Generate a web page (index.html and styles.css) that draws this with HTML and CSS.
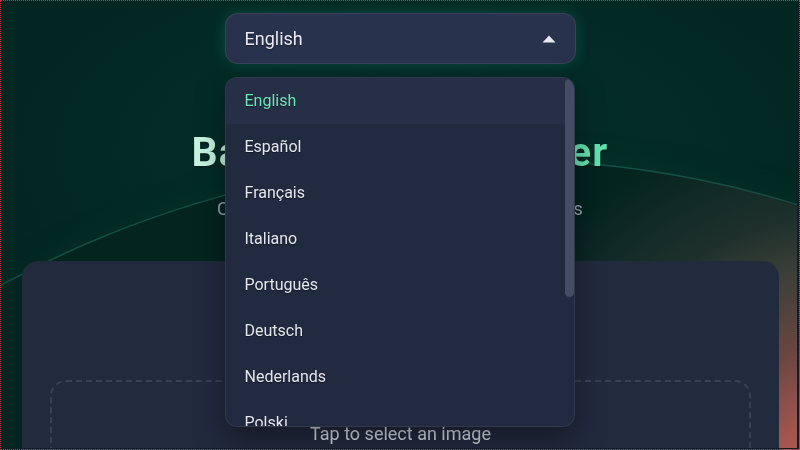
FILE: index.html
```html
<!DOCTYPE html>
<html lang="en">
<head>
<meta charset="utf-8">
<title>Background Remover</title>
<link rel="stylesheet" href="styles.css">
</head>
<body>
<div class="backdrop"><div class="orb"></div></div>
<main class="page">
  <div class="lang">
    <button class="lang-btn" type="button">
      <span class="lang-current">English</span>
      <svg class="caret" width="14" height="8" viewBox="0 0 14 8"><path d="M7 0.5 L13.5 7.5 L0.5 7.5 Z" fill="#e6e9f0"/></svg>
    </button>
    <div class="lang-menu">
      <ul class="lang-list">
        <li class="lang-item is-active">English</li>
        <li class="lang-item">Español</li>
        <li class="lang-item">Français</li>
        <li class="lang-item">Italiano</li>
        <li class="lang-item">Português</li>
        <li class="lang-item">Deutsch</li>
        <li class="lang-item">Nederlands</li>
        <li class="lang-item">Polski</li>
        <li class="lang-item">Русский</li>
        <li class="lang-item">Türkçe</li>
        <li class="lang-item">日本語</li>
        <li class="lang-item">中文</li>
      </ul>
      <div class="lang-thumb"></div>
    </div>
  </div>
  <h1 class="title">Background Remover</h1>
  <p class="subtitle">Change or remove backgrounds from pictures</p>
  <section class="card">
    <div class="dropzone">
      <p class="dropzone-text">Tap to select an image</p>
    </div>
  </section>
</main>
<div class="frame"></div>
</body>
</html>
```
FILE: styles.css
```css
* { box-sizing: border-box; }
html, body {
  margin: 0;
  height: 450px;
  overflow: hidden;
}
body {
  font-family: Roboto, "Noto Sans", "Noto Sans CJK SC", sans-serif;
  background:
    radial-gradient(ellipse 520px 260px at 420px 150px, #05302a 0%, rgba(5,48,42,0) 100%),
    #022520;
  color: #e5e8ef;
}
.backdrop {
  position: fixed;
  inset: 0;
  overflow: hidden;
  z-index: 0;
}
.orb {
  position: absolute;
  left: -535px;
  top: 160px;
  width: 2060px;
  height: 2060px;
  border-radius: 50%;
  background:
    radial-gradient(circle 390px at 1380px 340px, #c0625b 0%, #a55650 21%, #6a4641 40%, #3b3f38 60%, #1f302c 73%, rgba(3,37,32,0) 100%),
    #03241f;
  box-shadow: 0 0 0 1.5px rgba(86, 190, 170, 0.24), 0 -10px 22px rgba(8, 60, 52, 0.22);
}
.page {
  position: relative;
  z-index: 1;
  display: flex;
  flex-direction: column;
  align-items: center;
  padding-top: 13px;
}
.lang {
  position: relative;
  width: 351px;
  z-index: 5;
}
.lang-btn {
  width: 100%;
  height: 51px;
  display: flex;
  align-items: center;
  justify-content: space-between;
  padding: 0 19px 0 19px;
  background: #29324d;
  border: 1px solid rgba(255,255,255,0.08);
  border-radius: 13px;
  box-shadow: 0 0 16px rgba(52, 211, 153, 0.2);
  font-family: inherit;
  font-size: 18px;
  color: #e8ebf2;
  text-shadow: 0 1px 1px rgba(0,0,0,0.5);
  cursor: pointer;
}
.caret { display: block; }
.lang-menu {
  position: absolute;
  top: 64px;
  left: 0;
  right: 1px;
  height: 350px;
  overflow: hidden;
  background: #222a40;
  border: 1px solid rgba(255,255,255,0.07);
  border-radius: 12px;
  box-shadow: 0 12px 30px rgba(0,0,0,0.4);
}
.lang-list {
  margin: 0;
  padding: 0;
  list-style: none;
  height: 100%;
  overflow-y: auto;
  scrollbar-width: none;
}
.lang-thumb {
  position: absolute;
  top: 1px;
  right: 0;
  width: 9px;
  height: 218px;
  border-radius: 5px;
  background: #444d63;
}
.lang-item {
  height: 46px;
  line-height: 46px;
  padding: 0 19px;
  font-size: 16px;
  color: #e3e7ee;
  text-shadow: 0 1px 1px rgba(0,0,0,0.5);
}
.lang-item.is-active {
  background: #272f47;
  color: #6ee7b7;
}
.title {
  margin: 64px 0 0;
  font-size: 41px;
  line-height: 48px;
  letter-spacing: 1.2px;
  font-weight: 700;
  background: linear-gradient(90deg, #c8f5e2 0%, #9af0cc 50%, #5fe2ae 100%);
  -webkit-background-clip: text;
  background-clip: text;
  color: transparent;
  -webkit-text-fill-color: transparent;
  filter: drop-shadow(0 1px 1px rgba(0,0,0,0.45));
}
.subtitle {
  margin: 21px 0 0;
  font-size: 18px;
  line-height: 24px;
  color: #9aa3b4;
}
.card {
  align-self: stretch;
  margin: 40px 21px 0 22px;
  padding: 119px 28px 28px;
  background: #222a3e;
  border-radius: 16px;
  height: 260px;
}
.dropzone {
  border: 2px dashed #384155;
  border-radius: 16px;
  padding-top: 40px;
  height: 120px;
  text-align: center;
}
.dropzone-text {
  margin: 0;
  font-size: 18px;
  line-height: 24px;
  color: #d6dbe4;
}
.frame {
  position: fixed;
  inset: 0;
  z-index: 10;
  pointer-events: none;
  border: 1px dotted #d8303c;
  box-shadow: inset -2px -1px 0 #161c26;
}
```
